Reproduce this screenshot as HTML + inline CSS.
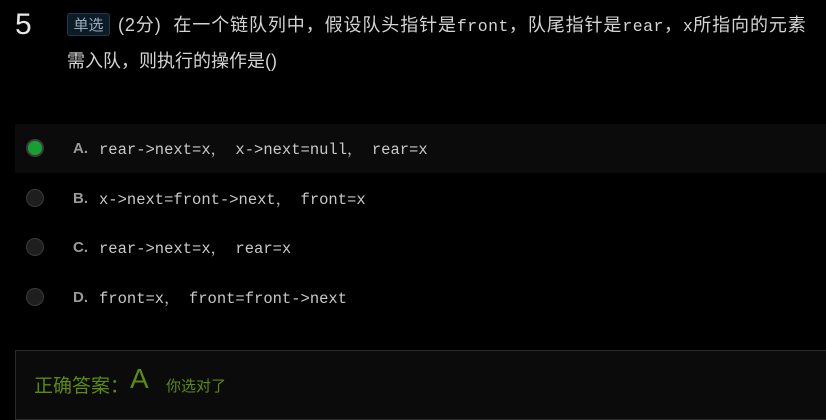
<!DOCTYPE html>
<html><head><meta charset="utf-8"><style>
body{margin:0;width:826px;height:406px;background:#000;overflow:hidden;position:relative;font-family:"Liberation Sans","Noto Sans CJK SC",sans-serif;color:#d8d8d8}
.num{position:absolute;left:15px;top:8px;font-size:30px;color:#e6e6e6;font-family:"Liberation Sans",sans-serif}
.tag{position:absolute;left:67px;top:13px;width:43px;height:23px;border:1px solid #1f3a4d;background:#0c1c26;border-radius:3px;color:#9ab;font-size:15px;line-height:23px;text-align:center;box-sizing:border-box}
.q{position:absolute;left:118px;top:8px;font-size:18px;line-height:35px;width:708px;white-space:nowrap;color:#d4d4d4;letter-spacing:0.9px}
.q .m{font-family:"Liberation Mono",monospace;font-size:16.5px;letter-spacing:0.5px}
.l2{position:absolute;left:67px;top:44px;font-size:18px;line-height:35px;color:#d4d4d4}
.rowA{position:absolute;left:15px;top:124px;width:811px;height:49px;background:#0b0b0b}
.opt{position:absolute;left:0;height:30px;width:826px}
.rad{position:absolute;left:26px;top:6px;width:18px;height:18px;border-radius:50%;background:#1e1e1e;border:1px solid #3a3a3a;box-sizing:border-box}
.rad.on{background:#16a032;border:2px solid #3b3b3b}
.let{position:absolute;left:73px;top:7px;font-weight:bold;font-size:15px;color:#9a9a9a;font-family:"Liberation Sans",sans-serif}
.txt{position:absolute;left:99px;top:4px;font-family:"Liberation Mono","Noto Serif CJK SC",monospace;font-size:15.5px;color:#c8c8c8}
.ans{position:absolute;left:15px;top:350px;width:820px;height:70px;background:#0b0b0b;border:1px solid #2a2a2a;box-sizing:border-box}
.ans .a1{position:absolute;left:18px;top:20px;font-size:19px;color:#5e8a0c}
.ans .a2{position:absolute;left:114px;top:12px;font-size:28px;color:#5e8a0c}
.ans .a3{position:absolute;left:150px;top:24px;font-size:15px;color:#5e8a0c}
</style></head><body>
<div class="num">5</div>
<div class="tag">单选</div>
<div class="q">(2分) &nbsp;在一个链队列中，假设队头指针是<span class="m">front</span>，队尾指针是<span class="m">rear</span>，<span class="m">x</span>所指向的元素</div>
<div class="l2">需入队，则执行的操作是()</div>
<div class="rowA"></div>
<div class="opt" style="top:133px"><div class="rad on"></div><div class="let">A.</div><div class="txt">rear-&gt;next=x， x-&gt;next=null， rear=x</div></div>
<div class="opt" style="top:183px"><div class="rad"></div><div class="let">B.</div><div class="txt">x-&gt;next=front-&gt;next， front=x</div></div>
<div class="opt" style="top:232px"><div class="rad"></div><div class="let">C.</div><div class="txt">rear-&gt;next=x， rear=x</div></div>
<div class="opt" style="top:282px"><div class="rad"></div><div class="let">D.</div><div class="txt">front=x， front=front-&gt;next</div></div>
<div class="ans"><span class="a1">正确答案：</span><span class="a2">A</span><span class="a3">你选对了</span></div>
</body></html>
